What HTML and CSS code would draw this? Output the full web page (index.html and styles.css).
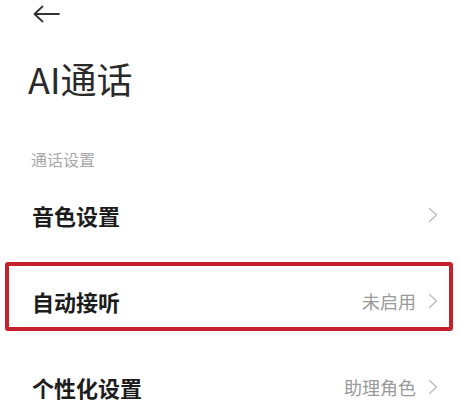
FILE: index.html
```html
<!DOCTYPE html>
<html lang="zh">
<head>
<meta charset="utf-8">
<link rel="stylesheet" href="styles.css">
</head>
<body>
<div class="page">
  <div class="topbar">
    <svg class="back" width="28" height="18" viewBox="0 0 28 18">
      <path d="M27 9H2.5M10.5 1.5L2.5 9l8 7.5" fill="none" stroke="#333" stroke-width="1.8" stroke-linecap="round" stroke-linejoin="round"/>
    </svg>
  </div>
  <h1 class="title">AI通话</h1>
  <div class="section">通话设置</div>
  <div class="list">
    <div class="row">
      <span class="label">音色设置</span>
      <span class="right">
        <svg class="chev" width="10" height="16" viewBox="0 0 10 16"><path d="M1.5 1.5L8.5 8l-7 6.5" fill="none" stroke="#bdbdbd" stroke-width="1.4" stroke-linecap="round" stroke-linejoin="round"/></svg>
      </span>
    </div>
    <div class="row highlighted">
      <span class="label">自动接听</span>
      <span class="right">
        <span class="value">未启用</span>
        <svg class="chev" width="10" height="16" viewBox="0 0 10 16"><path d="M1.5 1.5L8.5 8l-7 6.5" fill="none" stroke="#bdbdbd" stroke-width="1.4" stroke-linecap="round" stroke-linejoin="round"/></svg>
      </span>
      <div class="mark"></div>
    </div>
    <div class="row last">
      <span class="label">个性化设置</span>
      <span class="right">
        <span class="value">助理角色</span>
        <svg class="chev" width="10" height="16" viewBox="0 0 10 16"><path d="M1.5 1.5L8.5 8l-7 6.5" fill="none" stroke="#bdbdbd" stroke-width="1.4" stroke-linecap="round" stroke-linejoin="round"/></svg>
      </span>
    </div>
  </div>
</div>
</body>
</html>
```
FILE: styles.css
```css
html, body {
  margin: 0;
  padding: 0;
  background: #ffffff;
}
body {
  font-family: "Noto Sans CJK SC", "Noto Sans", sans-serif;
  color: #1a1a1a;
  width: 460px;
  height: 401px;
  overflow: hidden;
}
.page {
  display: flex;
  flex-direction: column;
}
.topbar {
  padding: 5px 0 0 32px;
  height: 18px;
}
.back {
  display: block;
}
.title {
  margin: 31px 0 0 28px;
  font-size: 36px;
  line-height: 48px;
  font-weight: 400;
  color: #2a2a2a;
}
.section {
  margin: 45px 0 0 31px;
  font-size: 16px;
  line-height: 24px;
  color: #a8a8a8;
}
.list {
  margin-top: 1px;
  display: flex;
  flex-direction: column;
}
.row {
  position: relative;
  display: flex;
  align-items: center;
  justify-content: space-between;
  padding: 30px 22px 30px 32px;
}
.row.last {
  padding-bottom: 0;
}
.label {
  font-size: 22px;
  line-height: 26px;
  font-weight: 700;
  color: #1c1c1c;
}
.right {
  display: flex;
  align-items: center;
  gap: 12px;
}
.value {
  font-size: 18px;
  line-height: 24px;
  color: #9a9a9a;
}
.chev {
  display: block;
}
.mark {
  position: absolute;
  left: 5px;
  top: 4px;
  width: 448px;
  height: 69px;
  box-sizing: border-box;
  border: 4px solid #c4212d;
  border-radius: 3px;
  pointer-events: none;
}
```
